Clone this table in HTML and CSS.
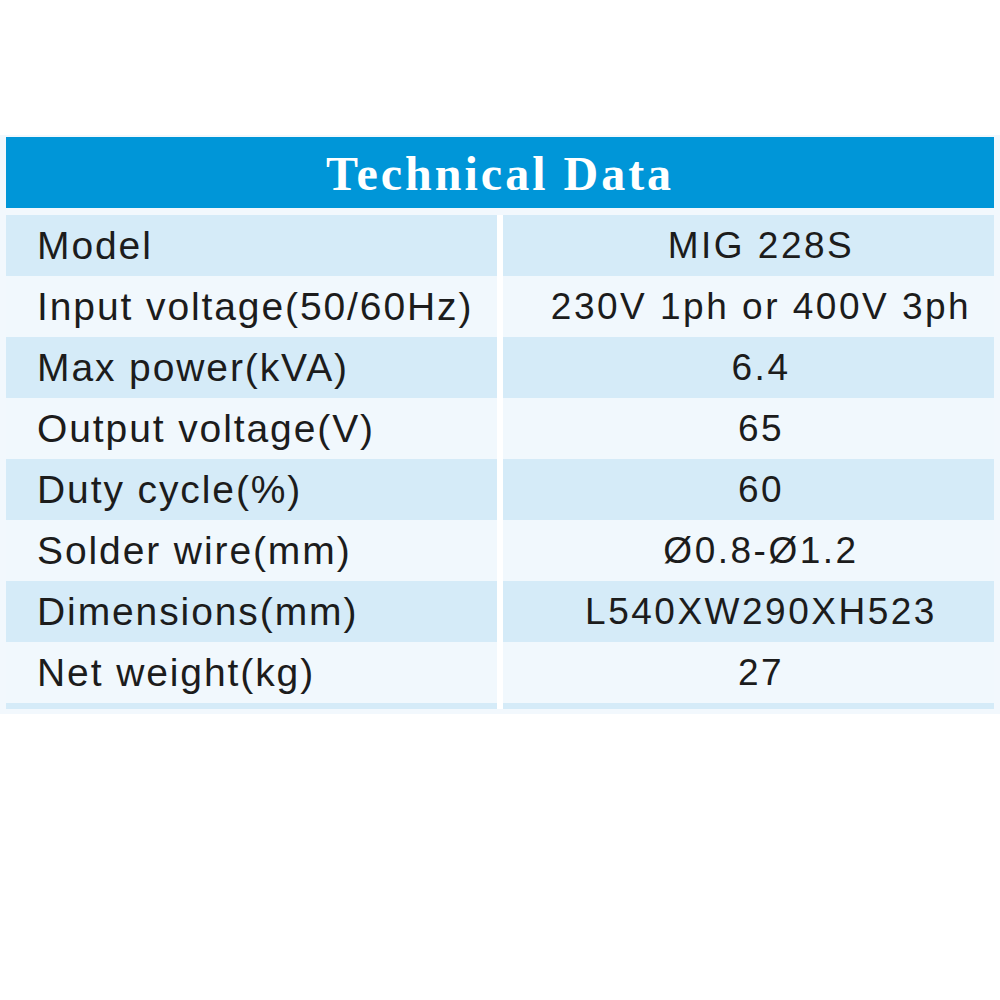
FILE: index.html
```html
<!DOCTYPE html>
<html>
<head>
<meta charset="utf-8">
<link rel="stylesheet" href="styles.css">
</head>
<body>
<div class="sheet">
  <div class="title">Technical Data</div>
  <div class="grid">
    <div class="cell key dark">Model</div><div class="cell val dark">MIG 228S</div>
    <div class="cell key">Input voltage(50/60Hz)</div><div class="cell val">230V 1ph or 400V 3ph</div>
    <div class="cell key dark">Max power(kVA)</div><div class="cell val dark">6.4</div>
    <div class="cell key">Output voltage(V)</div><div class="cell val">65</div>
    <div class="cell key dark">Duty cycle(%)</div><div class="cell val dark">60</div>
    <div class="cell key">Solder wire(mm)</div><div class="cell val">Ø0.8-Ø1.2</div>
    <div class="cell key dark">Dimensions(mm)</div><div class="cell val dark">L540XW290XH523</div>
    <div class="cell key">Net weight(kg)</div><div class="cell val">27</div>
    <div class="strip"></div><div class="strip"></div>
  </div>
</div>
</body>
</html>
```
FILE: styles.css
```css
html, body {
  margin: 0;
  padding: 0;
  background: #ffffff;
}
.sheet {
  margin-top: 135px;
  background: #f2f8fd;
  padding: 2px 6px 5px;
}
.title {
  height: 71px;
  background: #0096d8;
  color: #ffffff;
  font-family: "Liberation Serif", serif;
  font-weight: bold;
  font-size: 48px;
  letter-spacing: 3px;
  display: flex;
  align-items: center;
  justify-content: center;
  padding-top: 2px;
  box-sizing: border-box;
}
.grid {
  margin-top: 7px;
  display: grid;
  grid-template-columns: 1fr 1fr;
  column-gap: 6px;
  background: #ffffff;
}
.cell {
  height: 61px;
  display: flex;
  align-items: center;
  background: #f1f8fd;
  color: #1c1c1c;
  font-family: "Liberation Sans", Arial, sans-serif;
}
.cell.dark {
  background: #d5ebf8;
}
.key {
  padding-left: 31px;
  font-size: 39px;
  letter-spacing: 1.9px;
}
.val {
  justify-content: center;
  padding-left: 25px;
  font-size: 37px;
  letter-spacing: 2.5px;
}
.strip {
  height: 6px;
  background: #d5ebf8;
}
```
